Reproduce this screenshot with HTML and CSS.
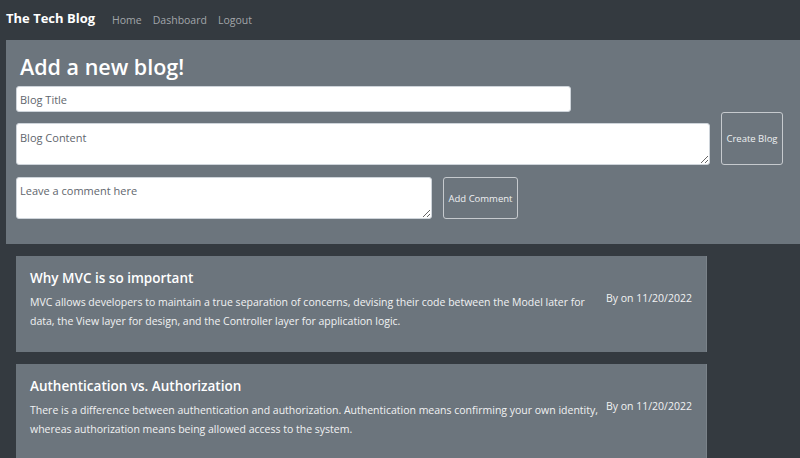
FILE: index.html
```html
<!DOCTYPE html>
<html lang="en">
<head>
<meta charset="utf-8">
<title>The Tech Blog</title>
<link rel="stylesheet" href="styles.css">
</head>
<body>
<nav class="navbar">
  <span class="brand">The Tech Blog</span>
  <a class="nav-link" href="#">Home</a>
  <a class="nav-link" href="#">Dashboard</a>
  <a class="nav-link" href="#">Logout</a>
</nav>
<section class="new-blog">
  <h1 class="new-title">Add a new blog!</h1>
  <div class="blog-row">
    <div class="blog-fields">
      <input class="field title-field" type="text" placeholder="Blog Title">
      <textarea class="field content-field" placeholder="Blog Content"></textarea>
    </div>
    <button class="btn create-btn">Create Blog</button>
  </div>
  <div class="comment-row">
    <textarea class="field comment-field" placeholder="Leave a comment here"></textarea>
    <button class="btn comment-btn">Add Comment</button>
  </div>
</section>
<main class="posts">
  <article class="post">
    <div class="post-main">
      <h2 class="post-title">Why MVC is so important</h2>
      <p class="post-body">MVC allows developers to maintain a true separation of concerns, devising their code between the Model later for data, the View layer for design, and the Controller layer for application logic.</p>
    </div>
    <div class="post-meta">By on 11/20/2022</div>
  </article>
  <article class="post">
    <div class="post-main">
      <h2 class="post-title">Authentication vs. Authorization</h2>
      <p class="post-body">There is a difference between authentication and authorization. Authentication means confirming your own identity, whereas authorization means being allowed access to the system.</p>
    </div>
    <div class="post-meta">By on 11/20/2022</div>
  </article>
</main>
</body>
</html>
```
FILE: styles.css
```css
* { box-sizing: border-box; }
html, body {
  margin: 0;
  background: #343a40;
  font-family: "Open Sans", "Noto Sans", sans-serif;
  color: #fff;
  overflow: hidden;
}
.navbar {
  height: 40px;
  display: flex;
  align-items: center;
  padding: 0 6px;
}
.brand {
  font-weight: 700;
  font-size: 13px;
  margin-right: 17px;
  position: relative;
  top: -2px;
}
.nav-link {
  color: #a2a6aa;
  text-decoration: none;
  font-size: 10.5px;
  margin-right: 11px;
}
.new-blog {
  background: #6c757d;
  margin-left: 6px;
  padding: 12px 10px 25px 10px;
  height: 204px;
}
.new-title {
  margin: 0 0 4px 4px;
  font-size: 21.5px;
  font-weight: 600;
  line-height: 30px;
}
.blog-row {
  display: flex;
  align-items: flex-end;
  gap: 11px;
}
.blog-fields {
  display: flex;
  flex-direction: column;
  gap: 11px;
  width: 694px;
}
.field {
  display: block;
  border: 1px solid #ced4da;
  border-radius: 3px;
  background: #fff;
  font-family: inherit;
  font-size: 11px;
  color: #495057;
  padding: 5px 3px;
  margin: 0;
}
.field::placeholder { color: #5f666d; }
.title-field { width: 555px; height: 26px; padding-top: 3px; padding-bottom: 3px; }
.content-field { width: 694px; height: 42px; resize: vertical; padding-top: 6px; }
.comment-field { width: 416px; height: 42px; resize: vertical; padding-top: 5px; }
.btn {
  background: transparent;
  border: 1px solid #c6cace;
  border-radius: 3px;
  color: #eef0f2;
  font-family: inherit;
  font-size: 9.5px;
  padding: 0 4px;
  margin: 0;
}
.create-btn { width: 62px; height: 53px; }
.comment-row {
  display: flex;
  gap: 11px;
  margin-top: 12px;
}
.comment-btn { width: 75px; height: 42px; }
.posts {
  padding: 12px 0 0 16px;
  display: flex;
  flex-direction: column;
  gap: 12px;
}
.post {
  width: 691px;
  min-height: 96px;
  background: #6c757d;
  border-right: 1px solid #7a8289;
  display: flex;
  padding: 12px 14px;
}
.post-main { width: 576px; }
.post-title {
  margin: 0 0 5px 0;
  font-size: 13.5px;
  font-weight: 600;
  line-height: 20px;
}
.post-body {
  margin: 0;
  font-size: 10.5px;
  line-height: 19px;
  color: #f1f2f3;
}
.post-meta {
  font-size: 10.5px;
  padding-top: 23px;
  color: #f1f2f3;
}
```
